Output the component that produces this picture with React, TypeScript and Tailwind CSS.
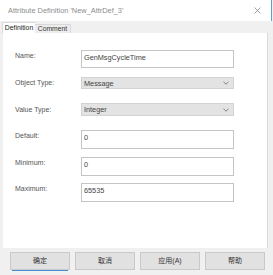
import React from "react";

const font = { fontFamily: '"Liberation Sans", "Noto Sans CJK SC", sans-serif' };

function Chevron() {
  return (
    <svg width="6" height="4" viewBox="0 0 6 4" className="mr-[4px]">
      <path d="M0.5 0.8 L3 3.2 L5.5 0.8" fill="none" stroke="#777" strokeWidth="0.9" />
    </svg>
  );
}

function TextRow({ label, value, h, mt }: { label: string; value: string; h: string; mt: string }) {
  return (
    <div className={`flex items-start ${mt}`}>
      <div className="w-[78px] pt-[2px] pl-[12px] text-[7px] leading-[8px] text-[#555]">{label}</div>
      <div className={`w-[153px] ${h} border border-[#c4c4c4] bg-white pl-[2px] pt-[2px] text-[7.3px] leading-[9px] text-[#444]`}>
        {value}
      </div>
    </div>
  );
}

function SelectRow({ label, value, h, mt }: { label: string; value: string; h: string; mt: string }) {
  return (
    <div className={`flex items-center ${mt}`}>
      <div className="w-[78px] pl-[12px] text-[7px] leading-[8px] text-[#555]">{label}</div>
      <div className={`w-[153px] ${h} border border-[#d2d2d2] bg-[#e3e3e3] flex items-center justify-between pl-[2px] text-[7.3px] leading-[9px] text-[#444]`}>
        <span>{value}</span>
        <Chevron />
      </div>
    </div>
  );
}

function Btn({ label, def }: { label: string; def?: boolean }) {
  return (
    <div className="flex flex-col">
      <div className="w-[60px] h-[18px] bg-[#e1e1e1] border border-[#c9c9c9] flex items-center justify-center text-[7px] text-[#333]">
        {label}
      </div>
      <div className={`h-[1px] mx-[2px] ${def ? "bg-[#4a90d9]" : "bg-transparent"}`} />
    </div>
  );
}

export default function App() {
  return (
    <div style={font} className="w-[273px] h-[275px] bg-[#f0f0f0] overflow-hidden flex flex-col">
      <div className="h-[21px] w-[272px] bg-white border-r border-[#5a9fd6] flex items-center justify-between pl-[8px] pr-[10px]">
        <span className="text-[7.4px] text-[#8c8c8c]">Attribute Definition 'New_AttrDef_3'</span>
        <svg width="7" height="7" viewBox="0 0 7 7">
          <path d="M0.5 0.5 L6.5 6.5 M6.5 0.5 L0.5 6.5" stroke="#888" strokeWidth="0.8" />
        </svg>
      </div>
      <div className="h-[12px] flex items-end pl-[2px]">
        <div className="w-[33px] h-[11px] bg-white flex items-center justify-center text-[6.8px] text-[#222] border-t border-l border-[#d9d9d9]">
          Definition
        </div>
        <div className="w-[36px] h-[9px] bg-[#ececec] flex items-center justify-center text-[6.8px] text-[#333] border-t border-r border-[#d9d9d9]">
          Comment
        </div>
      </div>
      <div className="ml-[3px] w-[265px] h-[215px] bg-white border-r border-[#d9d9d9] flex flex-col">
        <TextRow label="Name:" value="GenMsgCycleTime" h="h-[18px]" mt="mt-[17px]" />
        <SelectRow label="Object Type:" value="Message" h="h-[12px]" mt="mt-[9px]" />
        <SelectRow label="Value Type:" value="Integer" h="h-[13px]" mt="mt-[14px]" />
        <TextRow label="Default:" value="0" h="h-[19px]" mt="mt-[14px]" />
        <TextRow label="Minimum:" value="0" h="h-[19px]" mt="mt-[8px]" />
        <TextRow label="Maximum:" value="65535" h="h-[19px]" mt="mt-[7px]" />
      </div>
      <div className="flex gap-[5px] pl-[10px] mt-[4px]">
        <Btn label="确定" def />
        <Btn label="取消" />
        <Btn label="应用(A)" />
        <Btn label="帮助" />
      </div>
    </div>
  );
}
